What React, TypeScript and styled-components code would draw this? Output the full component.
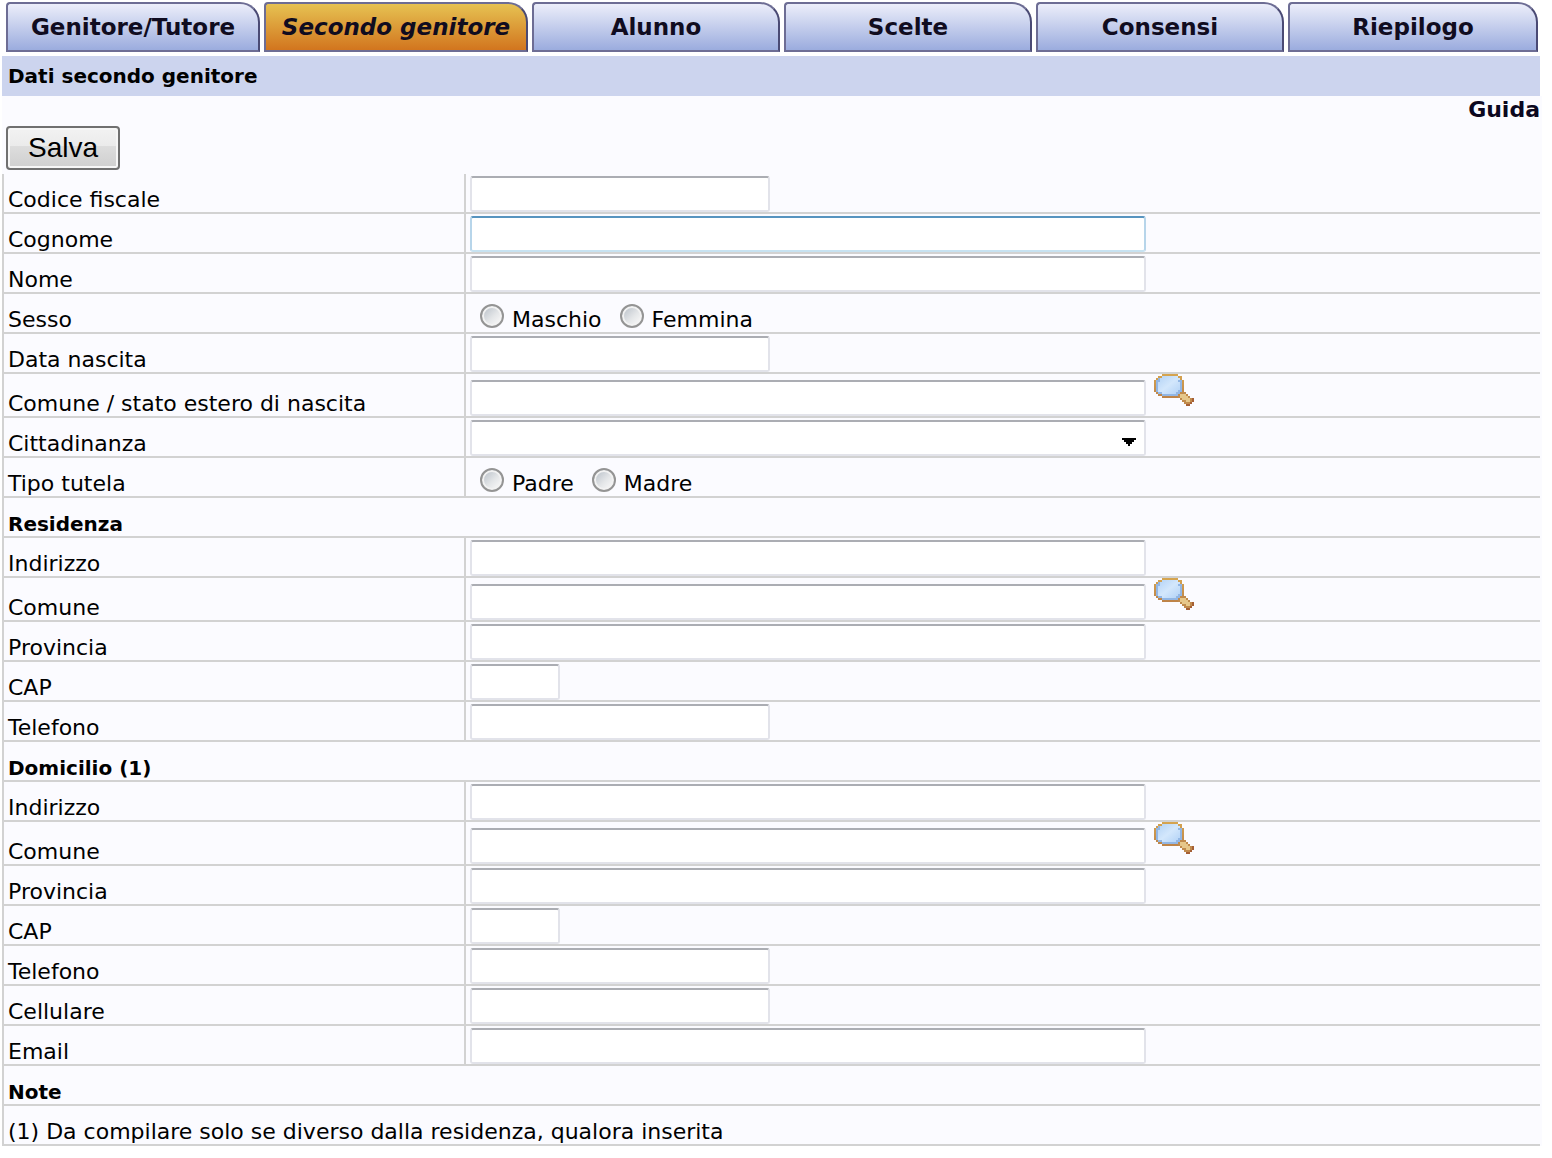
import React from 'react';
import styled, { createGlobalStyle } from 'styled-components';

const Global = createGlobalStyle`
  *, *::before, *::after { box-sizing: border-box; }
  body { margin: 0; background: #fff; color: #000; font-family: 'DejaVu Sans', Verdana, sans-serif; font-size: 22px; line-height: 24px; }
`;

const Page = styled.div`
  padding: 2px 12px 12px 2px;
`;

const Tabs = styled.nav`
  display: grid;
  grid-template-columns: 254fr 264fr 248fr 248fr 248fr 250fr;
  gap: 4px;
  padding: 0 2px 4px 4px;
`;

const Tab = styled.a<{ $active?: boolean }>`
  height: 50px;
  border: 2px solid #6d6d94;
  border-right-color: #4a4a74;
  border-radius: 4px 20px 0 0;
  background: ${p => (p.$active ? 'linear-gradient(#e6c252, #d2751e)' : 'linear-gradient(#eceefa, #9bacde)')};
  color: #100c20;
  font-size: 23px;
  font-weight: bold;
  font-style: ${p => (p.$active ? 'italic' : 'normal')};
  line-height: 46px;
  text-align: center;
  text-decoration: none;
  white-space: nowrap;
`;

const Title = styled.h1`
  margin: 0;
  padding: 0 6px;
  background: #ccd4ee;
  font-size: 20px;
  font-weight: bold;
  line-height: 40px;
`;

const Panel = styled.form`
  margin-right: -2px;
  padding-right: 2px;
  background: #fbfbff;
`;

const Help = styled.div`
  display: flex;
  justify-content: flex-end;
  height: 28px;
`;

const HelpLink = styled.a`
  color: #0c0820;
  font-size: 22px;
  font-weight: bold;
  line-height: 28px;
  text-decoration: none;
`;

const Actions = styled.div`
  padding: 2px 4px 4px;
`;

const Save = styled.button`
  display: block;
  height: 44px;
  padding: 0 20px;
  border: 2px solid #707070;
  border-radius: 4px;
  background: linear-gradient(#f2f2f2 0, #ebebeb 46%, #dddddd 46%, #cfcfcf 100%);
  box-shadow: inset 0 0 0 2px #f6f6f6;
  color: #000;
  font-family: 'Liberation Sans', Arial, sans-serif;
  font-size: 28px;
  line-height: 40px;
`;

const Table = styled.table`
  width: 100%;
  border-collapse: separate;
  border-spacing: 0;
`;

const cell = `
  height: 40px;
  border-left: 2px solid #d2d2d2;
  border-bottom: 2px solid #d2d2d2;
  padding: 0 4px;
  text-align: left;
  vertical-align: bottom;
`;

const LabelCell = styled.th`
  ${cell}
  width: 462px;
  font-weight: normal;
`;

const FieldCell = styled.td`
  ${cell}
`;

const SectionCell = styled.th`
  ${cell}
  font-size: 20px;
  font-weight: bold;
`;

const Field = styled.div`
  display: flex;
  align-items: flex-end;
`;

const widths = { long: '676px', medium: '300px', short: '90px' };

const control = `
  height: 36px;
  border: 2px solid #e2e3ea;
  border-top-color: #abadb3;
  border-radius: 3px;
  background: #fff;
  font: inherit;
  outline: none;
`;

const TextInput = styled.input<{ $size: keyof typeof widths; $highlight?: boolean }>`
  ${control}
  width: ${p => widths[p.$size]};
  padding: 0 4px;
  ${p => p.$highlight && 'border-color: #5794bf #b7d5ea #c7e2f1;'}
`;

const SelectWrap = styled.div`
  position: relative;
  display: flex;
`;

const Select = styled.select`
  ${control}
  width: ${widths.long};
  appearance: none;
`;

const Arrow = styled.svg`
  position: absolute;
  right: 10px;
  bottom: 10px;
  pointer-events: none;
`;

const RadioGroup = styled.div`
  display: flex;
  gap: 18px;
  padding-left: 10px;
`;

const RadioLabel = styled.label`
  display: flex;
  gap: 8px;
`;

const Radio = styled.input`
  appearance: none;
  width: 24px;
  height: 24px;
  margin: 0 0 4px;
  border: 2px solid #949494;
  border-radius: 50%;
  background: linear-gradient(135deg, #bcc3cb 10%, #e4e6e8 55%, #f8f8f8 90%);
  box-shadow: inset 0 0 0 2px #f2f2f2;
`;

const RadioText = styled.span`
  align-self: flex-end;
`;

const Search = styled.button`
  width: 40px;
  height: 42px;
  margin-left: 8px;
  padding: 0 0 10px;
  border: 0;
  background: none;
`;

const SearchSvg = styled.svg`
  display: block;
`;

function Magnifier({ id }: { id: string }) {
  return (
    <SearchSvg width="40" height="32" viewBox="0 0 20 16" shapeRendering="crispEdges" aria-hidden="true">
      <defs>
        <linearGradient id={`${id}-rim`} x1="0" y1="0" x2="0" y2="1">
          <stop offset="0" stopColor="#d6a550" />
          <stop offset="1" stopColor="#bd8248" />
        </linearGradient>
        <linearGradient id={`${id}-lens`} x1="0" y1="0" x2="1" y2="1">
          <stop offset="0" stopColor="#b4d3f6" />
          <stop offset="0.5" stopColor="#d3e7fc" />
          <stop offset="1" stopColor="#b2d2f6" />
        </linearGradient>
      </defs>
      <path d="M4 0h8v1h2v2h1v6h-1v2h-1v1H4v-1H2v-1H1V9H0V3h1V2h1V1h2z" fill={`url(#${id}-rim)`} />
      <path d="M4 1h8v1h1v1h1v6h-1v1h-1v1H4v-1H2V9H1V3h1V2h2z" fill="#92b6e4" />
      <path d="M4 1h8v1h1v1h-1v1h1v4h-1v1h-1v1H4V9H2V4h1V2h1z" fill={`url(#${id}-lens)`} />
      <path d="M13 9h3v1h1v1h1v1h2v2h-1v1h-1v1h-2v-1h-1v-1h-1v-1h-1v-1h-1v-2h1z" fill="#c08a4c" />
      <path d="M13 10h3v1h1v1h1v2h-2v-1h-2v-1h-1z" fill="#e6c78a" />
      <path d="M19 12h1v2h-1v1h-1v1h-2v-1h2v-1h1z" fill="#a55f35" />
    </SearchSvg>
  );
}

type Row =
  | { kind: 'text'; id: string; label: string; size: keyof typeof widths; highlight?: boolean; search?: boolean }
  | { kind: 'select'; id: string; label: string }
  | { kind: 'radio'; id: string; label: string; options: string[] }
  | { kind: 'section'; id: string; label: string };

const rows: Row[] = [
  { kind: 'text', id: 'codice', label: 'Codice fiscale', size: 'medium' },
  { kind: 'text', id: 'cognome', label: 'Cognome', size: 'long', highlight: true },
  { kind: 'text', id: 'nome', label: 'Nome', size: 'long' },
  { kind: 'radio', id: 'sesso', label: 'Sesso', options: ['Maschio', 'Femmina'] },
  { kind: 'text', id: 'data', label: 'Data nascita', size: 'medium' },
  { kind: 'text', id: 'comune-nascita', label: 'Comune / stato estero di nascita', size: 'long', search: true },
  { kind: 'select', id: 'cittadinanza', label: 'Cittadinanza' },
  { kind: 'radio', id: 'tutela', label: 'Tipo tutela', options: ['Padre', 'Madre'] },
  { kind: 'section', id: 'residenza', label: 'Residenza' },
  { kind: 'text', id: 'res-indirizzo', label: 'Indirizzo', size: 'long' },
  { kind: 'text', id: 'res-comune', label: 'Comune', size: 'long', search: true },
  { kind: 'text', id: 'res-provincia', label: 'Provincia', size: 'long' },
  { kind: 'text', id: 'res-cap', label: 'CAP', size: 'short' },
  { kind: 'text', id: 'res-telefono', label: 'Telefono', size: 'medium' },
  { kind: 'section', id: 'domicilio', label: 'Domicilio (1)' },
  { kind: 'text', id: 'dom-indirizzo', label: 'Indirizzo', size: 'long' },
  { kind: 'text', id: 'dom-comune', label: 'Comune', size: 'long', search: true },
  { kind: 'text', id: 'dom-provincia', label: 'Provincia', size: 'long' },
  { kind: 'text', id: 'dom-cap', label: 'CAP', size: 'short' },
  { kind: 'text', id: 'dom-telefono', label: 'Telefono', size: 'medium' },
  { kind: 'text', id: 'cellulare', label: 'Cellulare', size: 'medium' },
  { kind: 'text', id: 'email', label: 'Email', size: 'long' },
  { kind: 'section', id: 'note', label: 'Note' },
];

function FormRow({ row }: { row: Row }) {
  if (row.kind === 'section') {
    return (
      <tr>
        <SectionCell colSpan={2}>{row.label}</SectionCell>
      </tr>
    );
  }
  if (row.kind === 'radio') {
    return (
      <tr>
        <LabelCell scope="row" id={row.id}>{row.label}</LabelCell>
        <FieldCell>
          <RadioGroup role="radiogroup" aria-labelledby={row.id}>
            {row.options.map(option => (
              <RadioLabel key={option}>
                <Radio type="radio" name={row.id} value={option} />
                <RadioText>{option}</RadioText>
              </RadioLabel>
            ))}
          </RadioGroup>
        </FieldCell>
      </tr>
    );
  }
  return (
    <tr>
      <LabelCell scope="row">
        <label htmlFor={row.id}>{row.label}</label>
      </LabelCell>
      <FieldCell>
        <Field>
          {row.kind === 'text' ? (
            <TextInput id={row.id} name={row.id} type="text" $size={row.size} $highlight={row.highlight} />
          ) : (
            <SelectWrap>
              <Select id={row.id} name={row.id}>
                <option value="" aria-label="Nessuna" />
              </Select>
              <Arrow width="14" height="8" viewBox="0 0 7 4" shapeRendering="crispEdges" aria-hidden="true">
                <path d="M0 0h7v1H6v1H5v1H4v1H3V3H2V2H1V1H0z" />
              </Arrow>
            </SelectWrap>
          )}
          {row.kind === 'text' && row.search && (
            <Search type="button" aria-label="Cerca comune">
              <Magnifier id={`${row.id}-icon`} />
            </Search>
          )}
        </Field>
      </FieldCell>
    </tr>
  );
}

const tabs = ['Genitore/Tutore', 'Secondo genitore', 'Alunno', 'Scelte', 'Consensi', 'Riepilogo'];

export default function App() {
  return (
    <Page>
      <Global />
      <Tabs>
        {tabs.map(tab => (
          <Tab key={tab} href="#" $active={tab === 'Secondo genitore'}>{tab}</Tab>
        ))}
      </Tabs>
      <Title>Dati secondo genitore</Title>
      <Panel>
        <Help>
          <HelpLink href="#">Guida</HelpLink>
        </Help>
        <Actions>
          <Save type="button">Salva</Save>
        </Actions>
        <Table>
          <tbody>
            {rows.map(row => (
              <FormRow key={row.id} row={row} />
            ))}
            <tr>
              <FieldCell colSpan={2}>(1) Da compilare solo se diverso dalla residenza, qualora inserita</FieldCell>
            </tr>
          </tbody>
        </Table>
      </Panel>
    </Page>
  );
}
